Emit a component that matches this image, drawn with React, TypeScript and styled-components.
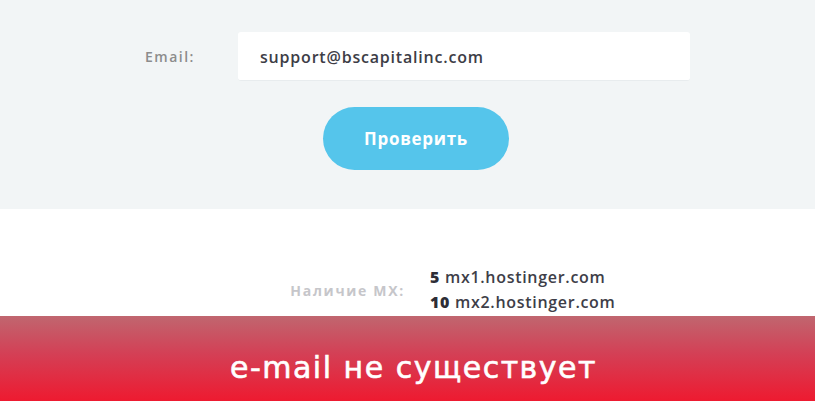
import React from "react";
import styled, { createGlobalStyle } from "styled-components";

const Global = createGlobalStyle`
  html, body { margin: 0; padding: 0; background: #ffffff; }
  body { font-family: "Open Sans", "DejaVu Sans", sans-serif; }
  * { box-sizing: border-box; }
`;

const Page = styled.div`
  width: 815px;
  height: 401px;
  overflow: hidden;
  position: relative;
`;

const FormSection = styled.section`
  background: #f2f5f6;
  height: 209px;
  padding-top: 32px;
  display: flex;
  flex-direction: column;
  align-items: flex-start;
`;

const FieldRow = styled.div`
  display: flex;
  align-items: center;
  padding-left: 145px;
`;

const Label = styled.label`
  width: 93px;
  font-size: 14px;
  font-weight: 600;
  letter-spacing: 1.5px;
  color: #8c8c8c;
`;

const Input = styled.div`
  width: 452px;
  height: 49px;
  background: #ffffff;
  border-radius: 3px;
  border-bottom: 1px solid #e8ecee;
  display: flex;
  align-items: center;
  padding-left: 22px;
  padding-top: 2px;
  font-size: 16px;
  font-weight: 600;
  letter-spacing: 0.8px;
  color: #3d3d46;
`;

const Button = styled.button`
  margin: 26px 0 0 323px;
  width: 186px;
  height: 63px;
  border: none;
  border-radius: 32px;
  background: #55c5eb;
  color: #ffffff;
  font-family: inherit;
  font-size: 17px;
  font-weight: 700;
  letter-spacing: 0.7px;
`;

const ResultSection = styled.section`
  padding-top: 56px;
  display: flex;
`;

const ResultRow = styled.div`
  display: flex;
  align-items: center;
`;

const ResultLabel = styled.div`
  width: 405px;
  text-align: right;
  font-size: 14px;
  font-weight: 700;
  letter-spacing: 1.7px;
  color: #c6c6ca;
`;

const Values = styled.div`
  margin-left: 25px;
  display: flex;
  flex-direction: column;
`;

const Value = styled.div`
  font-size: 16px;
  line-height: 25px;
  font-weight: 600;
  letter-spacing: 0.7px;
  color: #3e3e48;
  b { font-weight: 800; color: #2d2d36; }
`;

const Banner = styled.div`
  position: absolute;
  left: 0;
  right: 0;
  top: 316px;
  height: 85px;
  background: linear-gradient(to bottom, #c0666f 0%, #d43f55 45%, #ee1a30 100%);
  display: flex;
  align-items: center;
  justify-content: center;
  padding-top: 18px;
  padding-left: 12px;
  color: #ffffff;
  font-family: "DejaVu Sans", "Open Sans", sans-serif;
  font-size: 30px;
  font-weight: 400;
  letter-spacing: 1.5px;
  -webkit-text-stroke: 0.6px #ffffff;
`;

export default function App() {
  return (
    <Page>
      <Global />
      <FormSection>
        <FieldRow>
          <Label>Email:</Label>
          <Input>support@bscapitalinc.com</Input>
        </FieldRow>
        <Button>Проверить</Button>
      </FormSection>
      <ResultSection>
        <ResultRow>
          <ResultLabel>Наличие MX:</ResultLabel>
          <Values>
            <Value><b>5</b> mx1.hostinger.com</Value>
            <Value><b>10</b> mx2.hostinger.com</Value>
          </Values>
        </ResultRow>
      </ResultSection>
      <Banner>e-mail не существует</Banner>
    </Page>
  );
}
